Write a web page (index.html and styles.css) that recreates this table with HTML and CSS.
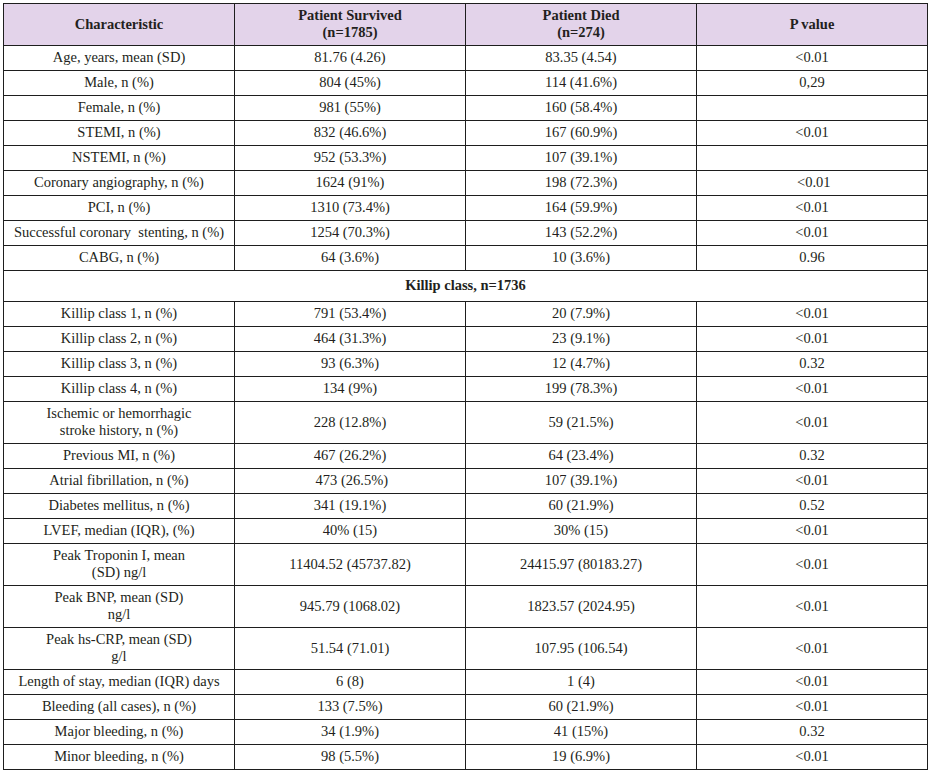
FILE: index.html
```
<!DOCTYPE html>
<html lang="en">
<head>
<meta charset="utf-8">
<title>Patient characteristics</title>
<link rel="stylesheet" href="styles.css">
</head>
<body>
<div class="wrap">
<table class="data">
<colgroup><col class="c"><col class="c"><col class="c"><col class="c"></colgroup>
<thead>
<tr><th>Characteristic</th><th>Patient Survived<br>(n=1785)</th><th>Patient Died<br>(n=274)</th><th>P value</th></tr>
</thead>
<tbody>
<tr><td>Age, years, mean (SD)</td><td>81.76 (4.26)</td><td>83.35 (4.54)</td><td>&lt;0.01</td></tr>
<tr><td>Male, n (%)</td><td>804 (45%)</td><td>114 (41.6%)</td><td>0,29</td></tr>
<tr><td>Female, n (%)</td><td>981 (55%)</td><td>160 (58.4%)</td><td></td></tr>
<tr><td>STEMI, n (%)</td><td>832 (46.6%)</td><td>167 (60.9%)</td><td>&lt;0.01</td></tr>
<tr><td>NSTEMI, n (%)</td><td>952 (53.3%)</td><td>107 (39.1%)</td><td></td></tr>
<tr><td>Coronary angiography, n (%)</td><td>1624 (91%)</td><td>198 (72.3%)</td><td>&nbsp;&lt;0.01</td></tr>
<tr><td>PCI, n (%)</td><td>1310 (73.4%)</td><td>164 (59.9%)</td><td>&lt;0.01</td></tr>
<tr><td>Successful coronary&nbsp; stenting, n (%)</td><td>1254 (70.3%)</td><td>143 (52.2%)</td><td>&lt;0.01</td></tr>
<tr><td>CABG, n (%)</td><td>64 (3.6%)</td><td>10 (3.6%)</td><td>0.96</td></tr>
<tr class="group"><td colspan="4">Killip class, n=1736</td></tr>
<tr><td>Killip class 1, n (%)</td><td>791 (53.4%)</td><td>20 (7.9%)</td><td>&lt;0.01</td></tr>
<tr><td>Killip class 2, n (%)</td><td>464 (31.3%)</td><td>23 (9.1%)</td><td>&lt;0.01</td></tr>
<tr><td>Killip class 3, n (%)</td><td>93 (6.3%)</td><td>12 (4.7%)</td><td>0.32</td></tr>
<tr><td>Killip class 4, n (%)</td><td>134 (9%)</td><td>199 (78.3%)</td><td>&lt;0.01</td></tr>
<tr><td>Ischemic or hemorrhagic<br>stroke history, n (%)</td><td>228 (12.8%)</td><td>59 (21.5%)</td><td>&lt;0.01</td></tr>
<tr><td>Previous MI, n (%)</td><td>467 (26.2%)</td><td>64 (23.4%)</td><td>0.32</td></tr>
<tr><td>Atrial fibrillation, n (%)</td><td>&nbsp;473 (26.5%)</td><td>107 (39.1%)</td><td>&lt;0.01</td></tr>
<tr><td>Diabetes mellitus, n (%)</td><td>341 (19.1%)</td><td>60 (21.9%)</td><td>0.52</td></tr>
<tr><td>LVEF, median (IQR), (%)</td><td>40% (15)</td><td>30% (15)</td><td>&lt;0.01</td></tr>
<tr><td>Peak Troponin I, mean<br>(SD) ng/l</td><td>11404.52 (45737.82)</td><td>24415.97 (80183.27)</td><td>&lt;0.01</td></tr>
<tr><td>Peak BNP, mean (SD)<br>ng/l</td><td>945.79 (1068.02)</td><td>1823.57 (2024.95)</td><td>&lt;0.01</td></tr>
<tr><td>Peak hs-CRP, mean (SD)<br>g/l</td><td>51.54 (71.01)</td><td>107.95 (106.54)</td><td>&lt;0.01</td></tr>
<tr><td>Length of stay, median (IQR) days</td><td>6 (8)</td><td>1 (4)</td><td>&lt;0.01</td></tr>
<tr><td>Bleeding (all cases), n (%)</td><td>133 (7.5%)</td><td>60 (21.9%)</td><td>&lt;0.01</td></tr>
<tr><td>Major bleeding, n (%)</td><td>34 (1.9%)</td><td>41 (15%)</td><td>0.32</td></tr>
<tr><td>Minor bleeding, n (%)</td><td>98 (5.5%)</td><td>19 (6.9%)</td><td>&lt;0.01</td></tr>
</tbody>
</table>
</div>
</body>
</html>
```
FILE: styles.css
```
html, body {
  margin: 0;
  padding: 0;
  background: #ffffff;
}
.wrap {
  padding: 3px 0 0 3px;
}
.data {
  border-collapse: collapse;
  table-layout: fixed;
  width: 924px;
  font-family: "Liberation Serif", "DejaVu Serif", serif;
  font-size: 14.5px;
  line-height: 17px;
  color: #231f20;
}
.data .c {
  width: 231px;
}
.data th,
.data td {
  border: 1px solid #1e1e1e;
  padding: 3px 4px 4px;
  text-align: center;
  vertical-align: middle;
}
.data th {
  background: #e3d3ea;
  font-weight: bold;
}
.data .group td {
  font-weight: bold;
  padding: 6px 4px 7px;
}
```
